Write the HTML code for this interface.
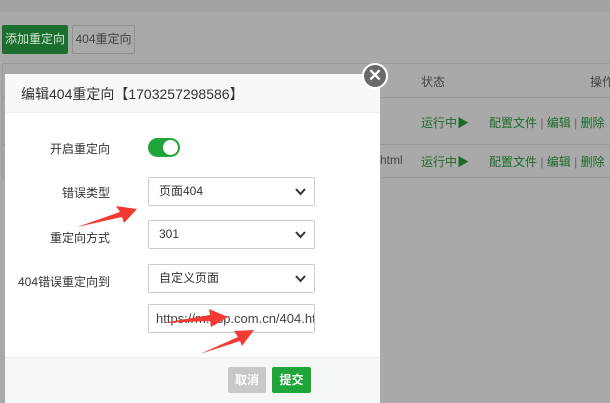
<!DOCTYPE html><html><head><meta charset="utf-8"><style>
*{margin:0;padding:0;box-sizing:border-box}
body{width:610px;height:403px;overflow:hidden;position:relative;background:#a9a9a9;font-family:"Liberation Sans","Noto Sans CJK SC",sans-serif;font-size:12px;color:#333}
.a{position:absolute;white-space:nowrap}
.top{left:0;top:0;width:610px;height:12px;background:#a3a3a3}
.b1{left:2px;top:25px;width:66px;height:29px;background:#1c6e2c;color:#cfe7d3;border-radius:2px;line-height:29px;text-align:center}
.b2{left:72px;top:25px;width:63px;height:29px;border:1px solid #909090;border-radius:2px;color:#444;line-height:27px;text-align:center}
.tbl{left:2px;top:63px;width:610px;height:115px;border:1px solid #999}
.line{height:1px;background:#999;left:2px;width:608px}
.g{color:#1d6b2b}
.modal{left:5px;top:74px;width:375px;height:329px;background:#fff}
.hd{left:0;top:0;width:375px;height:39px;background:#f8f8f8;border-bottom:1px solid #eee;font-size:14px;line-height:40px;padding-left:16px;color:#333}
.lbl{right:270px;text-align:right;width:110px;font-size:12px;color:#333}
.sel{left:143px;width:167px;height:29px;border:1px solid #ccc;border-radius:2px;line-height:27px;padding-left:10px;font-size:12px}
.sel svg{position:absolute;right:8px;top:10px}
.ft{left:0;top:283px;width:375px;height:46px;background:#f5f6f6;border-top:1px solid #eee}
</style></head><body>
<div class="a top"></div>
<div class="a b1">添加重定向</div>
<div class="a b2">404重定向</div>
<div class="a tbl"></div>
<div class="a line" style="top:97px"></div>
<div class="a line" style="top:144px"></div>
<div class="a" style="left:421px;top:73px;color:#444">状态</div>
<div class="a" style="left:590px;top:73px;color:#444">操作</div>
<div class="a g" style="left:421px;top:114px">运行中▶</div>
<div class="a g" style="left:489px;top:114px">配置文件 <span style="color:#666">|</span> 编辑 <span style="color:#666">|</span> 删除</div>
<div class="a" style="left:380px;top:153px;color:#444">html</div>
<div class="a g" style="left:421px;top:153px">运行中▶</div>
<div class="a g" style="left:489px;top:153px">配置文件 <span style="color:#666">|</span> 编辑 <span style="color:#666">|</span> 删除</div>
<div class="a modal">
<div class="a hd">编辑404重定向【1703257298586】</div>
<div class="a lbl" style="top:66px">开启重定向</div>
<div class="a" style="left:143px;top:64px;width:32px;height:19px;border-radius:10px;background:#20a53a"><div class="a" style="right:2px;top:2px;width:15px;height:15px;border-radius:50%;background:#fff"></div></div>
<div class="a lbl" style="top:110px">错误类型</div>
<div class="a sel" style="top:103px">页面404<svg width="11" height="8"><path d="M1 1L5.5 6L10 1" stroke="#333" stroke-width="2" fill="none"/></svg></div>
<div class="a lbl" style="top:155px">重定向方式</div>
<div class="a sel" style="top:146px">301<svg width="11" height="8"><path d="M1 1L5.5 6L10 1" stroke="#333" stroke-width="2" fill="none"/></svg></div>
<div class="a lbl" style="top:199px">404错误重定向到</div>
<div class="a sel" style="top:190px">自定义页面<svg width="11" height="8"><path d="M1 1L5.5 6L10 1" stroke="#333" stroke-width="2" fill="none"/></svg></div>
<div class="a sel" style="top:230px;overflow:hidden;color:#444;padding-left:7px;font-size:13px">https://m.gsp.com.cn/404.html</div>
<div class="a ft"></div>
<div class="a" style="left:223px;top:293px;width:38px;height:26px;background:#c8c8c8;color:#fff;border-radius:2px;line-height:26px;text-align:center;font-weight:bold">取消</div>
<div class="a" style="left:267px;top:293px;width:39px;height:26px;background:#20a53a;color:#fff;border-radius:2px;line-height:26px;text-align:center;font-weight:bold">提交</div>
</div>
<div class="a" style="left:362px;top:63px;width:26px;height:26px;border-radius:50%;background:#6a6a6a;border:2px solid #fff;color:#fff;text-align:center;line-height:21px;font-size:17px;font-weight:bold">✕</div>
<svg class="a" style="left:0;top:0" width="610" height="403">
<path d="M77 227L120 212L116 206L137 209L124 223L122 217Z" fill="#f23a33"/>
<path d="M162 323L210 315L209 309L228 317L211 327L210 321Z" fill="#f23a33"/>
<path d="M200 354L238 337L234 331L254 330L242 346L240 341Z" fill="#f23a33"/>
</svg>
</body></html>
